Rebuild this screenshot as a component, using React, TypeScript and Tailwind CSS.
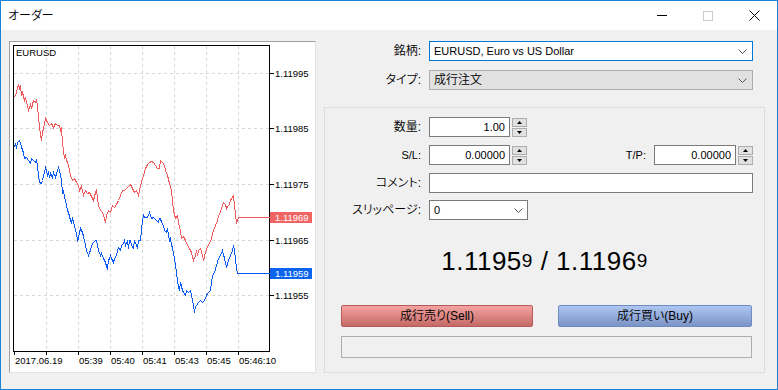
import * as React from 'react';

// ask (red) and bid (blue) ticks, in page pixels of the chart box
const ASK: [number, number][] = [
  [14, 97], [16, 92], [18, 84], [19, 88], [20, 86], [21, 95], [22, 92], [24, 100], [25, 98], [27, 105],
  [28, 110], [30, 104], [31, 108], [33, 100], [35, 102], [36, 100], [37, 105], [38, 118], [39, 125], [40, 135],
  [41, 140], [42, 132], [43, 128], [45, 118], [47, 122], [49, 125], [51, 123], [53, 127], [55, 123], [57, 125],
  [59, 125], [60, 130], [61, 128], [62, 143], [63, 150], [64, 158], [65, 155], [66, 160], [67, 162], [68, 165],
  [70, 175], [72, 180], [74, 178], [76, 182], [78, 185], [79, 190], [81, 186], [83, 195], [85, 190], [87, 193],
  [89, 192], [91, 196], [93, 200], [95, 192], [96, 190], [98, 205], [100, 210], [102, 212], [103, 215], [104, 218],
  [105, 222], [106, 215], [108, 210], [110, 212], [112, 205], [114, 207], [116, 204], [118, 200], [120, 195], [122, 190],
  [124, 190], [126, 188], [128, 186], [130, 184], [132, 188], [134, 192], [136, 190], [138, 195], [140, 185], [142, 178],
  [143, 175], [145, 168], [147, 164], [149, 162], [151, 161], [153, 162], [155, 165], [157, 168], [159, 168], [160, 160],
  [162, 162], [164, 165], [165, 170], [167, 175], [169, 183], [171, 190], [172, 200], [173, 210], [175, 218], [177, 215],
  [178, 222], [180, 230], [181, 238], [183, 236], [185, 240], [187, 245], [189, 248], [191, 252], [193, 260], [195, 255],
  [196, 250], [197, 255], [198, 250], [200, 248], [202, 255], [203, 260], [205, 252], [207, 246], [209, 243], [211, 238],
  [213, 230], [215, 225], [217, 220], [218, 215], [220, 212], [221, 208], [223, 202], [225, 204], [226, 208], [227, 206],
  [229, 204], [230, 200], [231, 198], [233, 195], [234, 205], [235, 214], [236, 222], [237, 220], [238, 217], [269, 217],
];

const BID: [number, number][] = [
  [14, 147], [15, 143], [16, 148], [17, 142], [19, 140], [20, 143], [21, 146], [22, 150], [23, 152], [24, 158],
  [26, 157], [28, 160], [30, 163], [31, 158], [33, 160], [35, 162], [36, 160], [37, 165], [38, 175], [39, 182],
  [41, 183], [42, 180], [44, 172], [45, 167], [46, 170], [47, 175], [48, 172], [49, 177], [50, 173], [52, 177],
  [53, 172], [55, 177], [56, 173], [58, 167], [59, 170], [60, 175], [61, 180], [62, 193], [63, 190], [64, 197],
  [65, 200], [66, 205], [67, 210], [68, 212], [70, 220], [71, 222], [72, 218], [74, 225], [75, 230], [76, 233],
  [77, 240], [78, 238], [79, 232], [80, 228], [82, 232], [83, 236], [85, 245], [86, 250], [88, 255], [89, 252],
  [90, 250], [91, 245], [93, 242], [95, 240], [96, 240], [97, 245], [98, 250], [100, 255], [101, 253], [103, 258],
  [104, 260], [105, 262], [106, 266], [107, 268], [108, 260], [109, 258], [110, 255], [111, 258], [113, 262], [114, 258],
  [116, 255], [117, 250], [118, 247], [120, 250], [121, 245], [123, 243], [124, 240], [125, 245], [127, 240], [128, 248],
  [129, 240], [130, 240], [131, 245], [133, 248], [134, 240], [136, 245], [137, 248], [138, 240], [140, 240], [141, 230],
  [142, 220], [143, 215], [144, 217], [147, 217], [149, 212], [151, 218], [153, 217], [156, 220], [158, 222], [159, 218],
  [160, 218], [161, 222], [163, 225], [164, 230], [166, 232], [167, 228], [168, 235], [169, 240], [170, 238], [171, 244],
  [172, 248], [173, 252], [174, 258], [175, 265], [176, 272], [177, 280], [178, 286], [179, 290], [180, 282], [181, 286],
  [182, 290], [183, 292], [185, 295], [186, 290], [188, 292], [190, 290], [191, 295], [192, 300], [193, 305], [194, 312],
  [195, 306], [196, 305], [198, 302], [200, 300], [202, 302], [204, 300], [206, 295], [207, 293], [208, 292], [210, 290],
  [211, 282], [212, 275], [214, 272], [216, 265], [218, 258], [220, 255], [222, 250], [224, 258], [226, 267], [228, 260],
  [230, 255], [232, 250], [233, 245], [234, 250], [235, 258], [236, 268], [237, 273], [269, 273],
];

const VGRID = [46, 78, 110, 142, 174, 206, 238];
const HGRID: [number, string][] = [
  [73, '1.11995'],
  [128, '1.11985'],
  [184, '1.11975'],
  [240, '1.11965'],
  [295, '1.11955'],
];
const TIMES: [number, string][] = [
  [14, '2017.06.19'],
  [78, '05:39'],
  [110, '05:40'],
  [142, '05:41'],
  [174, '05:43'],
  [206, '05:45'],
  [238, '05:46:10'],
];

const pts = (a: [number, number][]) => a.map(([x, y]) => `${x + 0.5},${y + 0.5}`).join(' ');

const Chart = () => (
  <svg width={305} height={330} viewBox="10 42 305 330" className="block">
    <g fontFamily="Liberation Sans, Arial, sans-serif" fontSize={9.5} fill="#000">
      {VGRID.map((x) => (
        <line key={x} x1={x + 0.5} y1={46} x2={x + 0.5} y2={351} stroke="#d8d8d8" strokeDasharray="3 3" />
      ))}
      {HGRID.map(([y]) => (
        <line key={y} x1={14} y1={y + 0.5} x2={269} y2={y + 0.5} stroke="#d8d8d8" strokeDasharray="3 3" />
      ))}
      <rect x={13.5} y={45.5} width={256} height={306} fill="none" stroke="#000" />
      {HGRID.map(([y, t]) => (
        <g key={t}>
          <line x1={269} y1={y + 0.5} x2={274} y2={y + 0.5} stroke="#000" />
          <text x={275} y={y + 3.5}>{t}</text>
        </g>
      ))}
      {[14, ...VGRID].map((x) => (
        <line key={x} x1={x + 0.5} y1={351} x2={x + 0.5} y2={355} stroke="#000" />
      ))}
      {TIMES.map(([x, t]) => (
        <text key={t} x={x + 1} y={364}>{t}</text>
      ))}
      <text x={16} y={55.5}>EURUSD</text>

      <polyline points={pts(ASK)} fill="none" stroke="#f05a5a" shapeRendering="crispEdges" />
      <polyline points={pts(BID)} fill="none" stroke="#0a5af5" shapeRendering="crispEdges" />

      <rect x={270} y={212} width={42} height={11} fill="#f06464" />
      <text x={275} y={221} fill="#fff">1.11969</text>
      <rect x={270} y={268} width={42} height={11} fill="#0a64f0" />
      <text x={275} y={277} fill="#fff">1.11959</text>
    </g>
  </svg>
);

const Chevron = () => (
  <svg width={9} height={5} viewBox="0 0 9 5" className="shrink-0">
    <polyline points="0.5,0.5 4.5,4.5 8.5,0.5" fill="none" stroke="#555" />
  </svg>
);

const Spin = () => (
  <div className="w-[15px] h-[19px] flex flex-col justify-between shrink-0">
    <div className="h-[9px] border border-[#adadad] bg-[#e1e1e1] flex items-center justify-center">
      <svg width={5} height={3} viewBox="0 0 5 3"><polygon points="2.5,0 5,3 0,3" fill="#000" /></svg>
    </div>
    <div className="h-[9px] border border-[#adadad] bg-[#e1e1e1] flex items-center justify-center">
      <svg width={5} height={3} viewBox="0 0 5 3"><polygon points="0,0 5,0 2.5,3" fill="#000" /></svg>
    </div>
  </div>
);

const NumField = ({ value, w }: { value: string; w: string }) => (
  <div className={`${w} h-[20px] bg-white border border-[#7a7a7a] flex items-center justify-end pr-[4px] text-[11px]`}>
    {value}
  </div>
);

const Label = ({ children, w = 'w-[105px]', size = 'text-[12px]' }: { children: React.ReactNode; w?: string; size?: string }) => (
  <div className={`${w} ${size} text-right font-[350] pr-[8px] shrink-0 leading-none`}>{children}</div>
);

export default function App() {
  return (
    <div className="w-[778px] h-[390px] border border-[#1883d7] bg-[#f0f0f0] flex flex-col overflow-hidden text-black [font-feature-settings:'palt'] font-['Liberation_Sans','Noto_Sans_CJK_JP',sans-serif]">
      {/* Title bar */}
      <div className="h-[29px] bg-white flex items-center shrink-0">
        <div className="pl-[7px] text-[12px] font-[350] flex-1">オーダー</div>
        <div className="flex h-full">
          <div className="w-[46px] h-full flex items-center justify-center">
            <div className="w-[10px] h-px bg-black" />
          </div>
          <div className="w-[46px] h-full flex items-center justify-center">
            <div className="w-[10px] h-[10px] border border-[#cccccc]" />
          </div>
          <div className="w-[46px] h-full flex items-center justify-center">
            <svg width={11} height={11} viewBox="0 0 11 11">
              <path d="M0.5 0.5L10.5 10.5M10.5 0.5L0.5 10.5" stroke="#000" strokeWidth={1} />
            </svg>
          </div>
        </div>
      </div>

      {/* Body */}
      <div className="flex flex-1 pl-[8px] pt-[11px]">
        <div className="w-[307px] h-[332px] border border-t-[#a0a0a0] border-l-[#a0a0a0] border-r-[#e3e3e3] border-b-[#e3e3e3] bg-white shrink-0">
          <Chart />
        </div>

        <div className="ml-[8px] w-[441px] flex flex-col">
          <div className="flex items-center h-[20px]">
            <Label>銘柄:</Label>
            <div className="w-[324px] h-[20px] bg-white border border-[#0078d7] flex items-center pl-[4px] pr-[5px] text-[11px]">
              <span className="flex-1">EURUSD, Euro vs US Dollar</span>
              <Chevron />
            </div>
          </div>
          <div className="flex items-center h-[20px] mt-[9px]">
            <Label>タイプ:</Label>
            <div className="w-[324px] h-[20px] bg-[#e1e1e1] border border-[#adadad] flex items-center pl-[4px] pr-[5px] text-[12px] font-[350]">
              <span className="flex-1">成行注文</span>
              <Chevron />
            </div>
          </div>

          {/* Order group */}
          <div className="mt-[17px] h-[266px] border border-[#dcdcdc] flex flex-col pt-[9px] pr-[11px]">
            <div className="flex items-center h-[20px]">
              <Label w="w-[104px]">数量:</Label>
              <NumField value="1.00" w="w-[81px]" />
              <div className="ml-[2px]"><Spin /></div>
            </div>
            <div className="flex items-center h-[20px] mt-[8px]">
              <Label w="w-[104px]" size="text-[11px]">S/L:</Label>
              <NumField value="0.00000" w="w-[81px]" />
              <div className="ml-[2px]"><Spin /></div>
              <div className="flex-1 text-right text-[11px] pr-[8px]">T/P:</div>
              <NumField value="0.00000" w="w-[82px]" />
              <div className="ml-[2px]"><Spin /></div>
            </div>
            <div className="flex items-center h-[20px] mt-[8px]">
              <Label w="w-[104px]">コメント:</Label>
              <div className="flex-1 h-[20px] bg-white border border-[#7a7a7a]" />
            </div>
            <div className="flex items-center h-[20px] mt-[7px]">
              <Label w="w-[104px]">スリッページ:</Label>
              <div className="w-[99px] h-[20px] bg-white border border-[#7a7a7a] flex items-center pl-[4px] pr-[4px] text-[11px]">
                <span className="flex-1">0</span>
                <Chevron />
              </div>
            </div>

            <div className="h-[40px] mt-[21px] ml-[11px] flex items-center justify-center font-['Liberation_Sans',sans-serif] tracking-[0.5px]">
              <span className="text-[26px] leading-none">1.1195</span>
              <span className="text-[19px] leading-none self-end mb-[11px]">9</span>
              <span className="text-[26px] leading-none whitespace-pre"> / 1.1196</span>
              <span className="text-[19px] leading-none self-end mb-[11px]">9</span>
            </div>

            <div className="mt-[24px] ml-[16px] w-[411px] flex justify-between">
              <div className="w-[192px] h-[22px] border border-[#b85a5a] rounded-[2px] bg-linear-to-b from-[#f4a3a1] to-[#c46a67] flex items-center justify-center text-[12px] font-[350]">
                成行売り(Sell)
              </div>
              <div className="w-[194px] h-[22px] border border-[#6f8bc2] rounded-[2px] bg-linear-to-b from-[#adc6f1] to-[#7b94c6] flex items-center justify-center text-[12px] font-[350]">
                成行買い(Buy)
              </div>
            </div>
            <div className="mt-[9px] ml-[16px] w-[411px] h-[22px] border border-[#adadad] bg-[#f0f0f0]" />
          </div>
        </div>
      </div>
    </div>
  );
}
